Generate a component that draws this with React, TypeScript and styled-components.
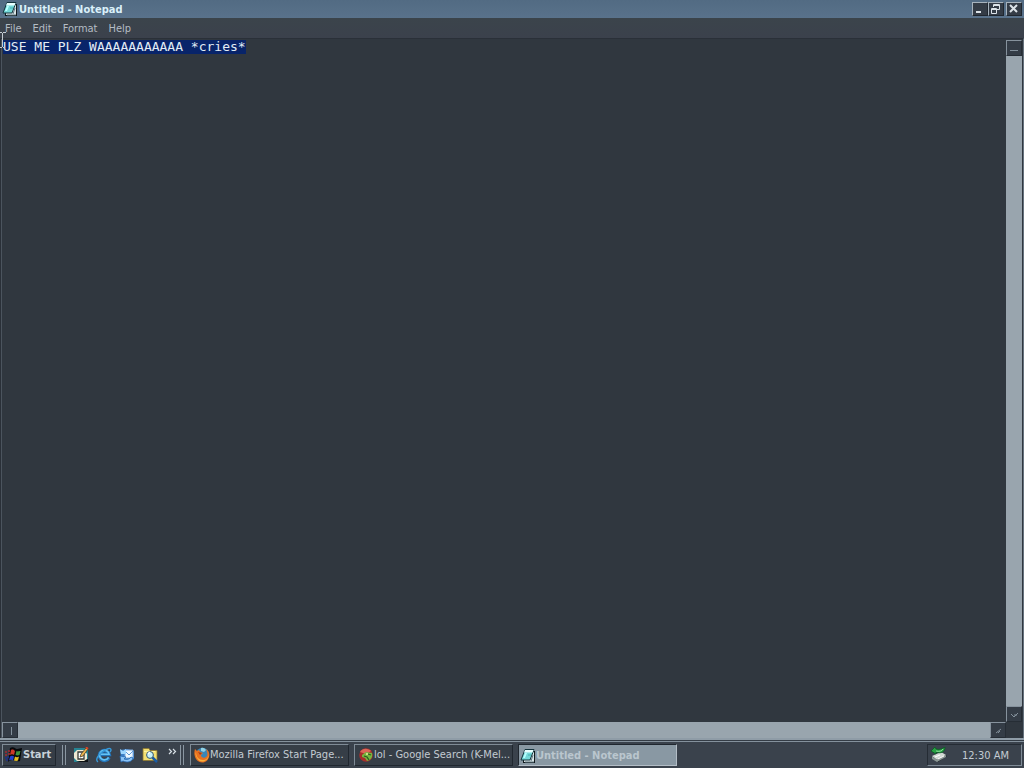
import React, { useEffect, useRef } from "react";
import styled, { createGlobalStyle, css } from "styled-components";

const ui = '"DejaVu Sans Condensed", "DejaVu Sans", sans-serif';

const Global = createGlobalStyle`
  * { box-sizing: border-box; }
  html, body { margin: 0; background: #30373f; }
  button { font: inherit; color: inherit; padding: 0; margin: 0; border-radius: 0; }
`;

const Desktop = styled.div`
  display: flex;
  flex-direction: column;
  height: 100vh;
  overflow: hidden;
  font: 11px/14px ${ui};
  color: #c3cbd2;
  background: #30373f;
`;

const NotepadWindow = styled.main`
  flex: 1;
  min-height: 0;
  display: flex;
  flex-direction: column;
`;

const TitleBar = styled.header`
  display: flex;
  align-items: center;
  gap: 1px;
  height: 18px;
  padding: 0 2px;
  background: linear-gradient(#526b83, #59728b);
`;

const Title = styled.h1`
  flex: 1;
  margin: 0;
  padding-top: 2px;
  font: bold 11px/16px ${ui};
  color: #d9f0fa;
`;

const WindowButtons = styled.div`
  display: flex;
`;

const WindowButton = styled.button<{ $apart?: boolean }>`
  display: grid;
  place-items: center;
  width: 16px;
  height: 14px;
  margin-left: ${(p) => (p.$apart ? 2 : 0)}px;
  background: #343c46;
  border: 1px solid;
  border-color: #a7b3bd #20272f #20272f #a7b3bd;
`;

const MenuBar = styled.nav`
  position: relative;
  display: flex;
  gap: 1px;
  height: 20px;
  background: linear-gradient(#3b444b, #3b414c);
`;

const MenuItem = styled.button`
  border: 0;
  background: none;
  padding: 2px 5px 0;
  line-height: 18px;
  color: #b4bcc4;
`;

const TextPointer = styled.svg`
  position: absolute;
  z-index: 1;
  left: 0;
  top: 14px;
  pointer-events: none;
`;

const Editor = styled.section`
  flex: 1;
  min-height: 0;
  display: grid;
  grid-template: minmax(0, 1fr) 16px / minmax(0, 1fr) 16px;
  padding: 1px 1px 0 1px;
  border: solid #2a3038;
  border-width: 1px 1px 0;
  border-right-color: #66727d;
  background: linear-gradient(90deg, #4b545e 1px, #30373f 1px);
`;

const Page = styled.textarea`
  display: block;
  width: 100%;
  height: 100%;
  margin: 0;
  padding: 0 1px;
  border: 0;
  outline: 0;
  resize: none;
  overflow: hidden;
  background: #30373f;
  color: #e3edf5;
  font: 13px/13px "DejaVu Sans Mono", monospace;
  &::selection { background: #08246a; color: #e3edf5; }
`;

const ScrollBar = styled.div<{ $vertical?: boolean }>`
  display: flex;
  flex-direction: ${(p) => (p.$vertical ? "column" : "row")};
`;

const ScrollButton = styled.button`
  display: grid;
  place-items: center;
  flex: none;
  width: 16px;
  height: 16px;
  border: 1px solid;
  border-color: #86929d #262d35 #262d35 #86929d;
  background: #343c46;
`;

const Thumb = styled.div`
  flex: 1;
  background: #99a5ae;
`;

const Taskbar = styled.footer`
  display: flex;
  align-items: center;
  height: 30px;
  padding: 6px 2px 2px;
  background: linear-gradient(#8f9ca7 2px, #343c45 2px, #343c45 3px, #84919c 3px, #84919c 4px, #3a424c 4px);
`;

const bevel = css`
  border: 1px solid;
  border-color: #7f8b96 #20272f #20272f #7f8b96;
`;

const StartButton = styled.button`
  ${bevel}
  display: flex;
  align-items: center;
  gap: 1px;
  width: 54px;
  height: 22px;
  padding: 0 2px;
  background: #353d46;
  font-weight: bold;
  color: #c8d2da;
`;

const Grip = styled.span`
  width: 4px;
  height: 20px;
  margin: 0 6px;
  border-left: 1px solid #8a96a1;
  border-right: 1px solid #8a96a1;
`;

const QuickLaunch = styled.div`
  display: flex;
  align-items: center;
  gap: 7px;
  width: 102px;
  padding-left: 1px;
`;

const QuickButton = styled.button`
  display: block;
  height: 16px;
  border: 0;
  background: none;
  & > svg { display: block; }
`;

const MoreButton = styled(QuickButton)`
  margin-left: 3px;
`;

const Tasks = styled.div`
  flex: 1;
  min-width: 0;
  display: flex;
  gap: 5px;
`;

const Task = styled.button<{ $active?: boolean }>`
  ${bevel}
  flex: 0 1 159px;
  min-width: 0;
  display: flex;
  align-items: center;
  height: 22px;
  padding: 0 2px 0 3px;
  background: #363e47;
  text-align: left;
  & > svg { flex: none; }
  ${(p) =>
    p.$active &&
    css`
      background: #8998a3;
      border-color: #20272f #b3bdc6 #b3bdc6 #20272f;
      color: #bac6ce;
      font-weight: bold;
      padding: 2px 0 0 1px;
    `}
`;

const TaskLabel = styled.span`
  white-space: nowrap;
`;

const Tray = styled.div`
  display: flex;
  align-items: center;
  justify-content: space-between;
  width: 95px;
  height: 22px;
  padding: 0 12px 0 2px;
  border: 1px solid;
  border-color: #252c34 #7f8b96 #7f8b96 #252c34;
  & > time { padding-top: 2px; }
`;

const NotepadIcon = () => (
  <svg width="16" height="16" viewBox="0 0 16 16" aria-hidden="true">
    <path d="M6 3h9v12H3v-3z" fill="#10191d" />
    <path d="M11 4h3v10H4v-2h6z" fill="#d9e3e6" />
    <path d="M5 1.5h9L10 12H1z" fill="#74d9d9" stroke="#15343d" />
    <path d="M5 2h8.5l-1 2.5H4z" fill="#e8ffff" />
    <path d="M3 10l2-5 2 0-2 5z" fill="#b6ffff" />
    <path d="M8 7h3" stroke="#46aeb1" />
    <path d="M11 13l2-6M5 14h9" stroke="#617981" />
  </svg>
);

const WindowsLogo = () => (
  <svg width="17" height="16" viewBox="0 0 17 16" aria-hidden="true">
    <path d="M5 1c4-2 5 1 7 1s3-1 5-1l-2 13c-3 1-5-1-7-1s-3 0-5 2z" fill="#07090c" />
    <path d="M6 3c2-1 3 0 4 1l-1 4c-1-1-3-1-4 0z" fill="#ce3829" />
    <path d="M11.5 4c2 1 2 0 4 0l-1 4c-2 1-3 0-4 0z" fill="#3d923d" />
    <path d="M5 9.5c1-1 3-1 4 0l-1 4c-1-1-3-1-4 0z" fill="#2341d0" />
    <path d="M10 9.5c1 1 3 1 4 0l-1 4c-2 1-3 0-4 0z" fill="#e4bd25" />
    <path d="M0 5h2M3 4h2M0 8h2M3 7h2" stroke="#a42a32" strokeWidth="1.5" />
    <path d="M0 11h2M2 10h2M1 13h2" stroke="#1b2d8c" strokeWidth="1.5" />
  </svg>
);

const DesktopIcon = () => (
  <svg width="16" height="16" viewBox="0 0 16 16" aria-hidden="true">
    <path d="M1 1h14v14H1z" fill="#278493" />
    <path d="M3 15h12v-3z" fill="#0c1012" />
    <path d="M1 6l3-3h7l3 4v5l-3 2H4l-3-3z" fill="#f0ead4" />
    <path d="M5 5h6v7H5z" fill="#fff" stroke="#393c36" strokeWidth="1.3" />
    <path d="M7 10l1-3 5-6 2 1-5 7z" fill="#e9b34e" stroke="#3b3020" strokeWidth=".7" />
    <path d="M13 0l2 2" stroke="#d94124" strokeWidth="1.8" />
  </svg>
);

const ExplorerIcon = () => (
  <svg width="16" height="16" viewBox="0 0 16 16" aria-hidden="true">
    <path d="M13 10.5a5 5 0 1 1 .3-3H5" fill="none" stroke="#2476bb" strokeWidth="3.4" />
    <path d="M12.6 10.3a4.8 4.8 0 1 1 .5-3H5" fill="none" stroke="#65c3f3" strokeWidth="1.6" />
    <path d="M2 15c-3-2 0-7 4-10s9-5 9-2c0 1-1 2-1 2" fill="none" stroke="#379bdc" strokeWidth="1.4" />
  </svg>
);

const OutlookIcon = () => (
  <svg width="16" height="16" viewBox="0 0 16 16" aria-hidden="true">
    <path d="M1 3l7-1 7 2v8l-7 3-6-4z" fill="#3b7ec7" />
    <path d="M6 3h8v8H6z" fill="#edf7ff" stroke="#7daadd" />
    <path d="M6 4l4 4 4-4" fill="none" stroke="#5d98d8" />
    <path d="M1 2l3 2 3-2v5H2z" fill="#9ed6ff" />
    <path d="M1 9l6 1-2 2c3 1 6 0 7-2l2 1c-1 4-6 5-10 3l-2 1z" fill="#8bc3f6" stroke="#2468b2" strokeWidth=".8" />
  </svg>
);

const SearchIcon = () => (
  <svg width="16" height="16" viewBox="0 0 16 16" aria-hidden="true">
    <path d="M1 1.5h6l1 2h7v10H1z" fill="#f3df72" stroke="#8b7630" strokeWidth=".8" />
    <path d="M2 4.5h11" stroke="#fff4a2" />
    <path d="M10 10l5 5" stroke="#195da6" strokeWidth="2.5" />
    <circle cx="8" cy="8" r="3.4" fill="#c8f2fb" stroke="#31566e" />
    <path d="M6 7l2-2" stroke="#fff" strokeWidth="1.5" />
  </svg>
);

const FirefoxIcon = () => (
  <svg width="16" height="16" viewBox="0 0 16 16" aria-hidden="true">
    <circle cx="8.5" cy="7" r="6.3" fill="#3a86b7" />
    <path d="M7 1c3-1 4 1 5 2l-2 2-3-1z" fill="#91d1e4" />
    <path d="M1 2l2 2 2-1 1 2 3 1-2 2c0 3 4 4 6 1 1-2 0-5-1-7 3 2 4 5 3 8-2 7-10 7-13 2C0 9 0 5 1 2z" fill="#e77020" />
    <path d="M2 5c0 5 3 8 7 8 3 0 5-2 6-5-1 7-9 9-12 3-1-2-2-4-1-6z" fill="#f8b23c" />
    <path d="M4 5l4 1-2 2" fill="#a73a19" />
  </svg>
);

const KMeleonIcon = () => (
  <svg width="16" height="16" viewBox="0 0 16 16" aria-hidden="true">
    <circle cx="8" cy="8" r="6.8" fill="#a62e2b" />
    <path d="M2 5c3-5 9-3 11-1L8 7z" fill="#dd6557" />
    <path d="M4 8l4-3 6 1c1 4-1 7-5 8l-2-3-3-1z" fill="#78b63e" />
    <path d="M6 9l3 1 2 3M10 7l3 1" fill="none" stroke="#2b5c22" strokeWidth="1.3" />
    <circle cx="9" cy="7" r="1" fill="#e7ed9b" />
  </svg>
);

const SafelyRemoveIcon = () => (
  <svg width="18" height="16" viewBox="0 0 18 16" aria-hidden="true">
    <path d="M2 10l9-4 6 3-9 6z" fill="#11181a" />
    <path d="M2 9l9-4 5 3-9 5z" fill="#d1d8d3" />
    <path d="M2 9v3l5 3v-2zM7 13v2l9-5V8z" fill="#8c9895" />
    <path d="M5 10l5-2M8 12l6-3" stroke="#fff" />
    <path d="M1 4l4-4 1 2c3 1 6 0 9-2 0 5-4 7-9 5v2z" fill="#29a344" stroke="#0b5a24" strokeWidth=".8" />
    <path d="M6 4c3 1 6 0 7-2" fill="none" stroke="#8fe09a" />
  </svg>
);

const MoreIcon = () => (
  <svg width="9" height="16" viewBox="0 0 9 16" fill="none" stroke="#d8e0e6" aria-hidden="true">
    <path d="M1 2l2.5 2.5L1 7M5 2l2.5 2.5L5 7" strokeWidth="1.2" />
  </svg>
);

const Glyph = ({ d, width = 1 }: { d: string; width?: number }) => (
  <svg width="12" height="12" viewBox="0 0 12 12" fill="none" stroke="#dce3e8" strokeWidth={width} aria-hidden="true">
    <path d={d} />
  </svg>
);

const ScrollGlyph = ({ d }: { d: string }) => (
  <svg width="12" height="12" viewBox="0 0 12 12" fill="none" stroke="#83909b" aria-hidden="true">
    <path d={d} />
  </svg>
);

export default function App() {
  const page = useRef<HTMLTextAreaElement>(null);

  useEffect(() => {
    page.current?.focus({ preventScroll: true });
    page.current?.select();
  }, []);

  return (
    <Desktop>
      <Global />
      <NotepadWindow>
        <TitleBar>
          <NotepadIcon />
          <Title>Untitled - Notepad</Title>
          <WindowButtons>
            <WindowButton aria-label="Minimize"><Glyph d="M2 9h5" width={2} /></WindowButton>
            <WindowButton aria-label="Restore"><Glyph d="M3.5 4V1.5h6v5H7M3 2.5h6M1.5 5.5h5v5h-5zM1 6.5h6" /></WindowButton>
            <WindowButton $apart aria-label="Close"><Glyph d="M2 2l7 7M9 2l-7 7" width={2} /></WindowButton>
          </WindowButtons>
        </TitleBar>
        <MenuBar aria-label="Menu">
          <MenuItem>File</MenuItem>
          <MenuItem>Edit</MenuItem>
          <MenuItem>Format</MenuItem>
          <MenuItem>Help</MenuItem>
          <TextPointer width="6" height="17" viewBox="0 0 6 17" fill="none" stroke="#c5ccd2" aria-hidden="true">
            <path d="M0 .5h2M3 .5h3M2.5 1v14M0 15.5h2M3 15.5h2" />
          </TextPointer>
        </MenuBar>
        <Editor>
          <Page ref={page} aria-label="Document" spellCheck={false} defaultValue="USE ME PLZ WAAAAAAAAAAA *cries*" />
          <ScrollBar $vertical>
            <ScrollButton aria-label="Scroll up"><ScrollGlyph d="M2 8.5h8" /></ScrollButton>
            <Thumb />
            <ScrollButton aria-label="Scroll down"><ScrollGlyph d="M3 6l3 3 4-4M6 7h3" /></ScrollButton>
          </ScrollBar>
          <ScrollBar>
            <ScrollButton aria-label="Scroll left"><ScrollGlyph d="M7.5 3v8" /></ScrollButton>
            <Thumb />
            <ScrollButton aria-label="Scroll right"><ScrollGlyph d="M4 9l5-4M6 9l2-2" /></ScrollButton>
          </ScrollBar>
        </Editor>
      </NotepadWindow>
      <Taskbar>
        <StartButton><WindowsLogo />Start</StartButton>
        <Grip />
        <QuickLaunch>
          <QuickButton aria-label="Show desktop"><DesktopIcon /></QuickButton>
          <QuickButton aria-label="Internet Explorer"><ExplorerIcon /></QuickButton>
          <QuickButton aria-label="Outlook Express"><OutlookIcon /></QuickButton>
          <QuickButton aria-label="Search"><SearchIcon /></QuickButton>
          <MoreButton aria-label="More"><MoreIcon /></MoreButton>
        </QuickLaunch>
        <Grip />
        <Tasks>
          <Task><FirefoxIcon /><TaskLabel>Mozilla Firefox Start Page...</TaskLabel></Task>
          <Task><KMeleonIcon /><TaskLabel>lol - Google Search (K-Mel...</TaskLabel></Task>
          <Task $active><NotepadIcon /><TaskLabel>Untitled - Notepad</TaskLabel></Task>
        </Tasks>
        <Tray>
          <SafelyRemoveIcon />
          <time dateTime="00:30">12:30 AM</time>
        </Tray>
      </Taskbar>
    </Desktop>
  );
}
